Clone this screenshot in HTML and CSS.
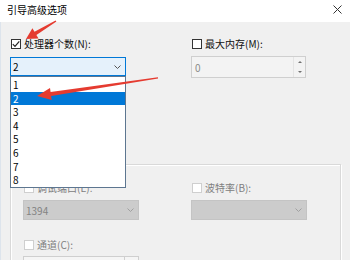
FILE: index.html
```html
<!DOCTYPE html>
<html lang="zh-CN">
<head>
<meta charset="utf-8">
<title>引导高级选项</title>
<link rel="stylesheet" href="styles.css">
</head>
<body>
<div class="window">
  <div class="titlebar">
    <span class="title">引导高级选项</span>
    <span class="close"><svg width="9" height="9" viewBox="0 0 9 9"><path d="M0.5 0.5L8.5 8.5M8.5 0.5L0.5 8.5" stroke="#333" stroke-width="1" fill="none"/></svg></span>
  </div>
  <div class="body">
    <div class="top">
      <label class="cb"><span class="box"><svg width="8" height="8" viewBox="0 0 8 8"><path d="M0.8 4.2L3 6.4L7.3 1.3" stroke="#222" stroke-width="1.2" fill="none"/></svg></span><span>处理器个数(N):</span></label>
      <label class="cb"><span class="box"></span><span>最大内存(M):</span></label>
      <div class="combo-wrap">
        <div class="combo focus"><span>2</span><svg class="chev" width="7" height="4" viewBox="0 0 7 4"><path d="M0.5 0.5L3.5 3.5L6.5 0.5" stroke="#555" stroke-width="1" fill="none"/></svg></div>
        <ul class="list">
          <li>1</li>
          <li class="sel">2</li>
          <li>3</li>
          <li>4</li>
          <li>5</li>
          <li>6</li>
          <li>7</li>
          <li>8</li>
        </ul>
      </div>
      <div class="spin">
        <span class="val">0</span>
        <div class="spin-btns"><span class="up"></span><span class="down"></span></div>
      </div>
    </div>
    <div class="group">
      <div class="two">
        <label class="cb dis"><span class="box"></span><span>调试端口(E):</span></label>
        <label class="cb dis"><span class="box"></span><span>波特率(B):</span></label>
      </div>
      <div class="two combos">
        <div class="combo dis"><span>1394</span><svg class="chev" width="7" height="4" viewBox="0 0 7 4"><path d="M0.5 0.5L3.5 3.5L6.5 0.5" stroke="#a0a0a0" stroke-width="1" fill="none"/></svg></div>
        <div class="combo dis"><span></span><svg class="chev" width="7" height="4" viewBox="0 0 7 4"><path d="M0.5 0.5L3.5 3.5L6.5 0.5" stroke="#a0a0a0" stroke-width="1" fill="none"/></svg></div>
      </div>
      <label class="cb dis row-c"><span class="box"></span><span>通道(C):</span></label>
      <div class="spin small">
        <span class="val"></span>
        <div class="spin-btns"></div>
      </div>
    </div>
  </div>
  <svg class="annot" width="350" height="260" viewBox="0 0 350 260">
    <polygon fill="#e53b30" points="26,39 38.5,38.5 36.4,34.9 56.4,21.6 55.6,20.4 34.5,31.8 32.4,28.2"/>
    <polygon fill="#e53b30" points="37,96 51.7,99.9 51.1,95.9 158.1,78.6 157.9,77.2 50.6,92 50,88"/>
  </svg>
</div>
</body>
</html>
```
FILE: styles.css
```css
html, body {
  margin: 0;
  padding: 0;
}
body {
  width: 350px;
  height: 260px;
  overflow: hidden;
  background: #f0f0f0;
  font-family: "Noto Sans CJK SC", "Noto Sans", sans-serif;
  font-size: 10px;
  color: #111;
}
.window {
  position: relative;
  width: 350px;
  height: 260px;
  overflow: hidden;
}
.titlebar {
  height: 22px;
  background: #fff;
  display: flex;
  justify-content: space-between;
  align-items: flex-start;
}
.title {
  margin: 3px 0 0 7px;
  line-height: 14px;
  color: #000;
}
.close {
  margin: 5px 8px 0 0;
  width: 9px;
  height: 9px;
  display: flex;
}
.body {
  height: 238px;
  box-shadow: inset 1px 0 0 #dde4ec;
}
.top {
  display: grid;
  grid-template-columns: 181px 115px;
  padding: 16px 0 0 10px;
  row-gap: 6px;
  align-items: start;
  justify-items: start;
}
.cb {
  display: flex;
  align-items: center;
  height: 12px;
  line-height: 12px;
  gap: 3px;
  white-space: nowrap;
}
.cb .box {
  margin-left: 1px;
  width: 10px;
  height: 10px;
  box-sizing: border-box;
  border: 1px solid #333;
  background: #fff;
  flex: none;
  display: flex;
  align-items: center;
  justify-content: center;
}
.cb.dis {
  color: #808080;
}
.cb.dis .box {
  border-color: #cfcfcf;
}
.combo-wrap {
  position: relative;
  margin-top: 1px;
  width: 116px;
}
.combo {
  box-sizing: border-box;
  border: 1px solid #ccc;
  display: flex;
  align-items: center;
  justify-content: space-between;
  padding: 0 4px 0 2px;
  white-space: nowrap;
}
.combo.focus {
  height: 19px;
  border-color: #0078d7;
  background: #e5f1fb;
  color: #000;
}
.chev {
  flex: none;
  display: block;
}
.list {
  position: absolute;
  top: 100%;
  left: 0;
  width: 116px;
  box-sizing: border-box;
  margin: 0;
  padding: 1px 0 0;
  list-style: none;
  background: #fff;
  border: 1px solid #5d7690;
  z-index: 5;
  color: #000;
}
.list li {
  height: 13.6px;
  line-height: 13.6px;
  padding-left: 2px;
}
.list li.sel {
  background: #0078d7;
  color: #fff;
}
.spin {
  width: 115px;
  height: 22px;
  box-sizing: border-box;
  border: 1px solid #cfcfcf;
  background: #f3f3f3;
  display: flex;
  align-items: center;
}
.spin .val {
  padding-left: 3px;
  color: #8a8a8a;
}
.spin-btns {
  margin-left: auto;
  width: 12px;
  height: 100%;
  box-sizing: border-box;
  border-left: 1px solid #e4e4e4;
  display: flex;
  flex-direction: column;
  align-items: center;
  justify-content: space-around;
}
.spin-btns .up {
  width: 0;
  height: 0;
  border-left: 2px solid transparent;
  border-right: 2px solid transparent;
  border-bottom: 2px solid #707070;
}
.spin-btns .down {
  width: 0;
  height: 0;
  border-left: 2px solid transparent;
  border-right: 2px solid transparent;
  border-top: 2px solid #707070;
}
.group {
  margin: 86px 0 0 10px;
  width: 331px;
  height: 130px;
  box-sizing: border-box;
  border: 1px solid #d9d9d9;
  box-shadow: inset 1px 1px 0 #fff, 1px 1px 0 #fff;
  padding: 17px 0 0 12px;
}
.two {
  display: grid;
  grid-template-columns: 168px 116px;
  justify-items: start;
}
.combos {
  margin-top: 6px;
}
.combo.dis {
  width: 116px;
  height: 20px;
  background: #cccccc;
  border-color: #c4c4c4;
  color: #838383;
}
.row-c {
  margin-top: 19px;
}
.spin.small {
  margin-top: 5px;
  width: 116px;
  background: #f5f5f5;
}
.spin.small .spin-btns {
  width: 14px;
  border-left-color: #cfcfcf;
}
.annot {
  position: absolute;
  left: 0;
  top: 0;
  z-index: 10;
  pointer-events: none;
}
```
